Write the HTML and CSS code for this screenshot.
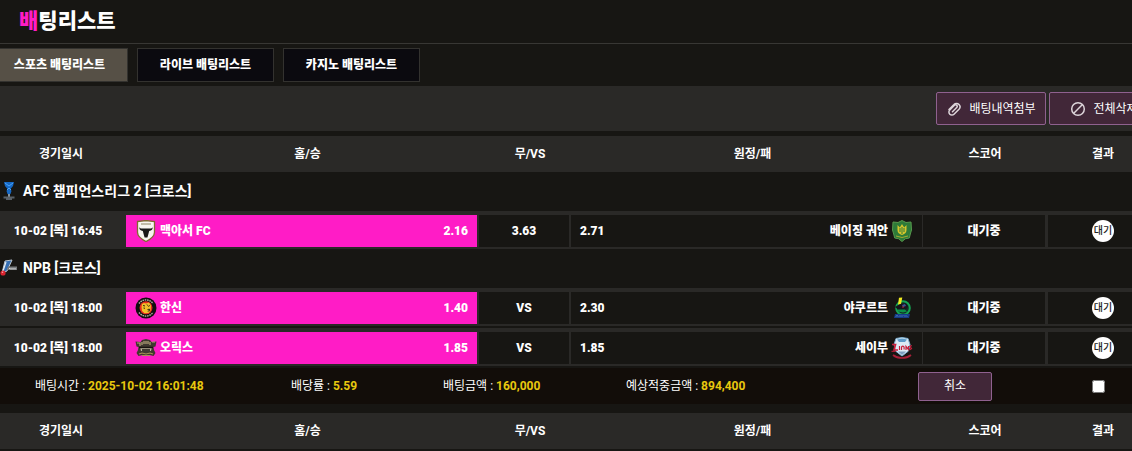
FILE: index.html
```html
<!DOCTYPE html>
<html lang="ko">
<head>
  <meta charset="utf-8">
  <title>배팅리스트</title>
  <link rel="stylesheet" href="styles.css">
</head>
<body>
  <header class="page-title">
    <h1><span class="point">배</span>팅리스트</h1>
  </header>

  <main class="content">
    <nav class="tabs">
      <a href="#sports" class="tab active">스포츠 배팅리스트</a>
      <a href="#live" class="tab">라이브 배팅리스트</a>
      <a href="#casino" class="tab">카지노 배팅리스트</a>
    </nav>

    <div class="toolbar">
      <button type="button" class="btn btn-tool">
        <svg class="btn-icon" viewBox="0 0 16 16"><path d="M3 8.500 8 3.500a3.400 3.400 0 0 1 5 0 3.400 3.400 0 0 1 0 4.700l-5 5a2.900 2.900 0 0 1-4.200 0 2.900 2.900 0 0 1 0-4.200l4.700-4.700a1.500 1.500 0 0 1 2.200 2.200L6.500 10.700"/></svg>
        배팅내역첨부
      </button>
      <button type="button" class="btn btn-tool">
        <svg class="btn-icon" viewBox="0 0 16 16"><circle cx="8" cy="8" r="6.300"/><path d="m3.800 12.200 8.400-8.400"/></svg>
        전체삭제
      </button>
    </div>

    <table class="bet-table">
      <colgroup>
        <col class="col-date"><col><col class="col-draw"><col><col class="col-score"><col class="col-result">
      </colgroup>
      <thead>
        <tr>
          <th class="h-date">경기일시</th>
          <th class="h-team">홈/승</th>
          <th class="h-team">무/VS</th>
          <th class="h-team">원정/패</th>
          <th>스코어</th>
          <th>결과</th>
        </tr>
      </thead>
      <tbody>
        <tr class="league">
          <td colspan="6">
            <div class="league-name">
              <svg class="league-icon" viewBox="0 0 18 20">
                <path d="M4 1h10l-1 4-2.500 3 1 2-1 3h-3l-1-3 1-2L5 5z" fill="#1668c4"/>
                <path d="m5 2 4 3 4-3M7 9l2-2 2 2" fill="none" stroke="#4ba3f5"/>
                <path d="M8 13h2v3H8z" fill="#8794a1"/>
                <path d="M3.500 15.500h11v2h-11zM6 17.500h6V19H6z" fill="#596068"/>
              </svg>
              AFC 챔피언스리그 2 [크로스]
            </div>
          </td>
        </tr>
        <tr class="game">
          <td class="date">10-02 [목] 16:45</td>
          <td class="home picked">
            <div class="team">
              <svg class="logo" viewBox="0 0 22 22">
                <path d="M2.500 1.500 11 .5l8.500 1v10.800c0 4.200-4 7-8.500 9.200-4.500-2.200-8.500-5-8.500-9.200z" fill="#f7f5ef" stroke="#806a30" stroke-width="1.300"/>
                <path d="M6 4h10" stroke="#8d8562"/>
                <path d="M4.500 7c.3 1.600 1.800 1.700 3.500 1.500l6 0c1.700.2 3.200.1 3.500-1.500.5 2.500-.8 3.700-3.300 4L13 15.500l-.6 2h-2.800l-.6-2L7.800 11c-2.500-.3-3.800-1.500-3.300-4z" fill="#191817"/>
              </svg>
              <span>맥아서 FC</span>
              <span class="odds">2.16</span>
            </div>
          </td>
          <td class="draw">3.63</td>
          <td class="away">
            <div class="team">
              <span>2.71</span>
              <span class="away-name">베이징 궈안</span>
              <svg class="logo" viewBox="0 0 22 22">
                <path d="m11 .5 4 2 5-.5.500 8-1.200 4-1 4-4 .8L11 21.500l-3.300-2.700-4-.8-1-4-1.200-4L2 2l5 .5z" fill="#2d7b38" stroke="#57984c"/>
                <path d="M6.500 5v5c0 3 2 4 4.500 5 2.500-1 4.500-2 4.500-5V5l-2.300 2.500L11 4 8.800 7.500z" fill="#d5c52c"/>
                <path d="M9 8v4M11 7v7M13 8v4" stroke="#2d7b38"/>
                <path d="m5 16 6 1.500 6-1.500" fill="none" stroke="#a4ad31"/>
              </svg>
            </div>
          </td>
          <td class="score">대기중</td>
          <td class="result"><span class="badge">대기</span></td>
        </tr>
        <tr class="league">
          <td colspan="6">
            <div class="league-name">
              <svg class="league-icon" viewBox="0 0 18 20">
                <path d="m5 3 7-1-5 11-5 2z" fill="#356fb4" stroke="#b9c5cf"/>
                <path d="m6 4-3 9" stroke="#e9eef2" stroke-width="1.200"/>
                <path d="M8 8.500h9v3.500H7z" fill="#777b7e"/>
                <path d="M9 10.500h1m1-.5v1.500m2-1.500v1.500m2-1.500v1.500" stroke="#e3e3e3"/>
                <circle cx="3" cy="15" r="2.600" fill="#d9232e"/>
                <circle cx="2.500" cy="14.200" r=".8" fill="#f5a4a8"/>
              </svg>
              NPB [크로스]
            </div>
          </td>
        </tr>
        <tr class="game">
          <td class="date">10-02 [목] 18:00</td>
          <td class="home picked">
            <div class="team">
              <svg class="logo" viewBox="0 0 22 22">
                <circle cx="11" cy="11" r="10.500" fill="#100f0f"/>
                <path d="M4 6.500a8.600 8.600 0 0 1 14 0M4 15.500a8.600 8.600 0 0 0 14 0" fill="none" stroke="#b9b1a8" stroke-width="1.400" stroke-dasharray="1.500 .8"/>
                <circle cx="11" cy="10.800" r="6.500" fill="#e52a1d"/>
                <path d="m7 7 2-1 2 .5 3-1 2 3-.5 5-2 2.500-4 .3L7 14l-.5-4z" fill="#f0c02a"/>
                <path d="m8 8.500 2 .5m2-1.500.8 1.200m2-.2-1.500 1m-4.800 1.500 1.500.3m2.500 1.200 2-.3v1.500l-1.800.5" fill="none" stroke="#1b1410" stroke-width=".9"/>
              </svg>
              <span>한신</span>
              <span class="odds">1.40</span>
            </div>
          </td>
          <td class="draw">VS</td>
          <td class="away">
            <div class="team">
              <span>2.30</span>
              <span class="away-name">야쿠르트</span>
              <svg class="logo" viewBox="0 0 22 22">
                <circle cx="12" cy="11" r="6.800" fill="#142a27" stroke="#15a453" stroke-width="2"/>
                <path d="M8 .8 11.300.4 9.800 8 7 7.500z" fill="#f1ed20"/>
                <path d="m4 10 5-3 6-.5 2 3-2 3H7z" fill="#15151d"/>
                <path d="m11 8 3-1 1 2-3 1z" fill="#3d5394"/>
                <path d="M7 12.500h7l2 2-4 1-5-1z" fill="#0d9047"/>
                <circle cx="12" cy="10" r=".8" fill="#c92e38"/>
                <path d="M4 17h15l-1 4H3z" fill="#153b88"/>
                <path d="m5 19.500 1-1 1 1m2-1v1m2-1v1m2-1 1 1m1-1 1 1" fill="none" stroke="#719bcb"/>
              </svg>
            </div>
          </td>
          <td class="score">대기중</td>
          <td class="result"><span class="badge">대기</span></td>
        </tr>
        <tr class="game">
          <td class="date">10-02 [목] 18:00</td>
          <td class="home picked">
            <div class="team">
              <svg class="logo" viewBox="0 0 22 22">
                <path d="m.5 4.500 5 .5 1.500-2 4-1 4 1 1.500 2 5-.5-1 5-2 .5.500 3 1.500 3-2 3-4-1H7.500l-4 1-2-3L3 13l.5-3-2-.5z" fill="#40392f"/>
                <path d="M2 6h3v3m2-4v3m2-4v3m2-3v3m2-3v3m2-2v3m2-3h3" fill="none" stroke="#b6a579" stroke-width="1.200"/>
                <path d="M5 10h12l-1 4H6z" fill="#bcb49c"/>
                <path d="M4 10.500h14M7 13h8" stroke="#18140f" stroke-width="1.600"/>
                <path d="m4 17 3-1 4 1 4-1 3 1M7 18.500h8" fill="none" stroke="#a69055" stroke-width="1.200"/>
              </svg>
              <span>오릭스</span>
              <span class="odds">1.85</span>
            </div>
          </td>
          <td class="draw">VS</td>
          <td class="away">
            <div class="team">
              <span>1.85</span>
              <span class="away-name">세이부</span>
              <svg class="logo" viewBox="0 0 22 22">
                <path d="m5 1.500 6-1 6 1 2 6-1.500 6.500L11 19l-6.500-5L3 7.500z" fill="#dcebf5" stroke="#7fb0d2"/>
                <path d="m6 2.500 5-1 5 1-2 2.500H8z" fill="#5d9cc9"/>
                <path d="M7 14.500h8L11 18z" fill="#7d9fc0"/>
                <path d="M1 7.500h3.500L3 13h4" fill="none" stroke="#c91f3b" stroke-width="1.700"/>
                <path d="M8.500 9v4M10.500 13v-2.500a1.300 1.300 0 0 1 2.600 0v2M15 13v-3.500l2.500 3V9M20.800 8.500l-1.800 1 1.500 2-1.800 1.300" fill="none" stroke="#c91f3b" stroke-width="1.200"/>
                <path d="M.5 14.300h4" stroke="#c91f3b"/>
                <path d="M2 18c2.500 2 5.500 3 9 3s6.500-1 9-3" fill="none" stroke="#a92039" stroke-width="1.700"/>
              </svg>
            </div>
          </td>
          <td class="score">대기중</td>
          <td class="result"><span class="badge">대기</span></td>
        </tr>
        <tr class="summary">
          <td colspan="6">
            <div class="summary-row">
              <span>배팅시간 : <strong>2025-10-02 16:01:48</strong></span>
              <span>배당률 : <strong>5.59</strong></span>
              <span>배팅금액 : <strong>160,000</strong></span>
              <span>예상적중금액 : <strong>894,400</strong></span>
              <button type="button" class="btn btn-cancel">취소</button>
              <input type="checkbox" class="bet-check" aria-label="배팅 선택">
            </div>
          </td>
        </tr>
      </tbody>
    </table>

    <table class="bet-table">
      <colgroup>
        <col class="col-date"><col><col class="col-draw"><col><col class="col-score"><col class="col-result">
      </colgroup>
      <thead>
        <tr>
          <th class="h-date">경기일시</th>
          <th class="h-team">홈/승</th>
          <th class="h-team">무/VS</th>
          <th class="h-team">원정/패</th>
          <th>스코어</th>
          <th>결과</th>
        </tr>
      </thead>
    </table>
  </main>
</body>
</html>
```
FILE: styles.css
```css
* {
  box-sizing: border-box;
}
body {
  margin: 0;
  overflow: hidden;
  background: #171613;
  color: #fff;
  font-family: Roboto, "Noto Sans CJK KR", sans-serif;
  font-size: 12px;
  line-height: 16px;
}
.page-title {
  padding: 6px 19px 7px;
  border-bottom: 1px solid #383734;
}
.page-title h1 {
  margin: 0;
  font-size: 21px;
  font-weight: 900;
  line-height: 30px;
}
.point {
  color: #ff1cc6;
}
/* the list is a little wider than the window */
.content {
  margin-right: -26px;
}
.tabs {
  display: flex;
  gap: 9px;
  margin-left: -9px;
  padding: 4px 0;
}
.tab {
  width: 137px;
  padding: 8px 0;
  border: 1px solid #33322f;
  background: #0b0a0f;
  color: #fff;
  font-weight: 900;
  text-align: center;
  text-decoration: none;
}
.tab.active {
  background: #565046;
}
.toolbar {
  display: flex;
  justify-content: flex-end;
  gap: 3px;
  margin-right: -1px;
  margin-bottom: 3px;
  padding: 6px 0;
  background: #2a2927;
}
.btn {
  display: flex;
  align-items: center;
  justify-content: center;
  gap: 7px;
  padding: 0;
  border: 1px solid #8f618f;
  border-radius: 2px;
  background: #412738;
  color: #fff;
  font-family: inherit;
  font-size: 12px;
  line-height: 16px;
  white-space: nowrap;
  cursor: pointer;
}
.btn-tool {
  width: 110px;
  height: 33px;
}
.btn-icon {
  width: 16px;
  height: 16px;
  fill: none;
  stroke: #ddd5da;
  stroke-width: 1.5;
  stroke-linecap: round;
}
.btn-cancel {
  width: 74px;
  height: 29px;
}

.bet-table {
  width: 100%;
  margin-bottom: 5px;
  border-spacing: 0 2px;
  table-layout: fixed;
}
.col-date {
  width: 126px;
}
.col-draw {
  width: 94px;
}
.col-score {
  width: 126px;
}
.col-result {
  width: 110px;
}
.bet-table th {
  height: 36px;
  padding: 0;
  background: #2a2927;
}
.bet-table .h-date {
  padding-right: 4px;
}
.bet-table .h-team {
  padding-left: 12px;
}
.bet-table td {
  padding: 0;
}
.league td {
  height: 35px;
  padding-bottom: 2px;
}
.league-name {
  display: flex;
  align-items: center;
  gap: 5px;
  font-size: 14px;
  font-weight: bold;
}
.league-icon {
  width: 18px;
  height: 20px;
}
.game td {
  height: 38px;
  border: solid #2a2927;
  border-width: 4px 0 2px;
  font-weight: 900;
  text-align: center;
}
.game .date {
  padding-right: 10px;
  background: #2a2927;
}
.game .picked {
  background: #ff1cc6;
}
.game .draw {
  border-width: 4px 2px 2px;
}
.game .score {
  border-width: 4px 3px 2px 1px;
}
.team {
  display: flex;
  align-items: center;
  gap: 3px;
  padding: 0 9px;
}
.logo {
  width: 22px;
  height: 22px;
}
.odds,
.away-name {
  margin-left: auto;
}
.game .badge {
  display: inline-block;
  width: 22px;
  border-radius: 50%;
  background: #fff;
  color: #222;
  font-size: 10px;
  font-weight: 500;
  line-height: 22px;
  vertical-align: middle;
}
.summary td {
  height: 36px;
  background: #120d09;
}
.summary-row {
  display: grid;
  grid-template-columns: 256fr 152fr 183fr 292fr 174fr 66fr;
  align-items: center;
  padding-left: 35px;
  white-space: nowrap;
}
.summary-row strong {
  color: #e8c80e;
}
.bet-check {
  width: 13px;
  height: 13px;
  margin: 0;
}
```
